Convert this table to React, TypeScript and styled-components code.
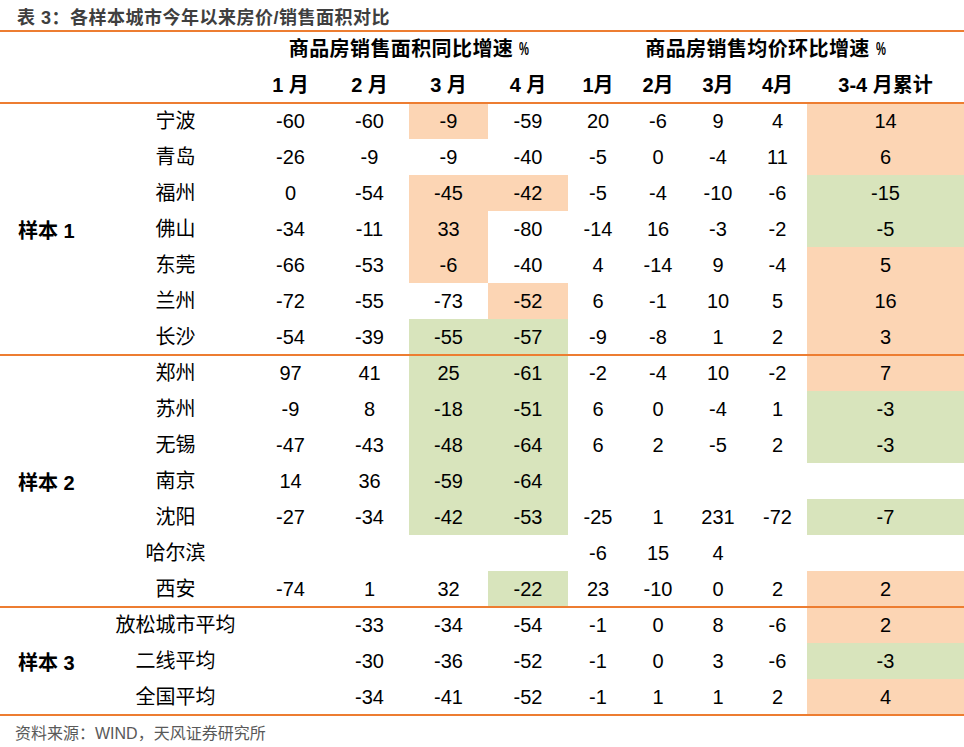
import React from "react";
import styled, { createGlobalStyle } from "styled-components";

const COLS = "100px 151px 79px 79px 79px 80px 60px 60px 60px 59px 1fr";
const ORANGE_LINE = "#ED7D31";
const TONES: Record<string, string> = { o: "#FCD5B4", g: "#D8E4BC" };

const GlobalStyle = createGlobalStyle`
  html, body { margin: 0; padding: 0; background: #fff; }
  body {
    font-family: "Liberation Sans", "Noto Sans CJK SC", sans-serif;
    color: #000;
  }
`;

const Page = styled.div`
  width: 964px;
  display: flex;
  flex-direction: column;
`;

const Title = styled.div`
  height: 31px;
  padding-left: 17px;
  display: flex;
  align-items: center;
  font-family: "Liberation Sans", "Noto Sans CJK SC", sans-serif;
  font-weight: bold;
  font-size: 18px;
  letter-spacing: 0.5px;
  color: #3f3f3f;
`;

const Rule = styled.div`
  height: 2px;
  margin: -1px 0;
  background: ${ORANGE_LINE};
  position: relative;
  z-index: 1;
`;

const HeaderGrid = styled.div`
  display: grid;
  grid-template-columns: ${COLS};
  grid-template-rows: 35px 37px;
  font-weight: bold;
  font-size: 20px;
`;

const HeadCell = styled.div<{ $span?: number }>`
  grid-column: span ${(p) => p.$span ?? 1};
  display: flex;
  align-items: center;
  justify-content: center;
  white-space: pre;
  line-height: 1;
`;

const GroupTitle = styled.span`
  letter-spacing: 0.4px;
`;

const Pct = styled.span`
  display: inline-block;
  font-size: 18px;
  margin-left: 6px;
  transform: scaleX(0.62);
  transform-origin: left center;
  width: 11px;
`;

const Section = styled.div<{ $rows: number }>`
  display: grid;
  grid-template-columns: ${COLS};
  grid-template-rows: repeat(${(p) => p.$rows}, 36px);
`;

const SampleLabel = styled.div<{ $rows: number }>`
  grid-column: 1;
  grid-row: 1 / span ${(p) => p.$rows};
  display: flex;
  align-items: center;
  padding-left: 18px;
  font-weight: bold;
  font-size: 20px;
  white-space: pre;
`;

const CityCell = styled.div`
  display: flex;
  align-items: center;
  justify-content: center;
  font-size: 20px;
  line-height: 1;
`;

const DataCell = styled.div<{ $tone?: string }>`
  display: flex;
  align-items: center;
  justify-content: center;
  font-size: 20px;
  line-height: 1;
  background: ${(p) => (p.$tone ? TONES[p.$tone] : "transparent")};
`;

const Footer = styled.div`
  padding: 10px 0 0 15px;
  line-height: 18px;
  font-size: 16px;
  color: #595959;
`;

type Cell = string | [string, string];
type Row = { city: string; cells: Cell[] };
type Block = { label: string; rows: Row[] };

const blocks: Block[] = [
  {
    label: "样本 1",
    rows: [
      { city: "宁波", cells: ["-60", "-60", ["-9", "o"], "-59", "20", "-6", "9", "4", ["14", "o"]] },
      { city: "青岛", cells: ["-26", "-9", "-9", "-40", "-5", "0", "-4", "11", ["6", "o"]] },
      { city: "福州", cells: ["0", "-54", ["-45", "o"], ["-42", "o"], "-5", "-4", "-10", "-6", ["-15", "g"]] },
      { city: "佛山", cells: ["-34", "-11", ["33", "o"], "-80", "-14", "16", "-3", "-2", ["-5", "g"]] },
      { city: "东莞", cells: ["-66", "-53", ["-6", "o"], "-40", "4", "-14", "9", "-4", ["5", "o"]] },
      { city: "兰州", cells: ["-72", "-55", "-73", ["-52", "o"], "6", "-1", "10", "5", ["16", "o"]] },
      { city: "长沙", cells: ["-54", "-39", ["-55", "g"], ["-57", "g"], "-9", "-8", "1", "2", ["3", "o"]] },
    ],
  },
  {
    label: "样本 2",
    rows: [
      { city: "郑州", cells: ["97", "41", ["25", "g"], ["-61", "g"], "-2", "-4", "10", "-2", ["7", "o"]] },
      { city: "苏州", cells: ["-9", "8", ["-18", "g"], ["-51", "g"], "6", "0", "-4", "1", ["-3", "g"]] },
      { city: "无锡", cells: ["-47", "-43", ["-48", "g"], ["-64", "g"], "6", "2", "-5", "2", ["-3", "g"]] },
      { city: "南京", cells: ["14", "36", ["-59", "g"], ["-64", "g"], "", "", "", "", ""] },
      { city: "沈阳", cells: ["-27", "-34", ["-42", "g"], ["-53", "g"], "-25", "1", "231", "-72", ["-7", "g"]] },
      { city: "哈尔滨", cells: ["", "", "", "", "-6", "15", "4", "", ""] },
      { city: "西安", cells: ["-74", "1", "32", ["-22", "g"], "23", "-10", "0", "2", ["2", "o"]] },
    ],
  },
  {
    label: "样本 3",
    rows: [
      { city: "放松城市平均", cells: ["", "-33", "-34", "-54", "-1", "0", "8", "-6", ["2", "o"]] },
      { city: "二线平均", cells: ["", "-30", "-36", "-52", "-1", "0", "3", "-6", ["-3", "g"]] },
      { city: "全国平均", cells: ["", "-34", "-41", "-52", "-1", "1", "1", "2", ["4", "o"]] },
    ],
  },
];

const months1 = ["1 月", "2 月", "3 月", "4 月"];
const months2 = ["1月", "2月", "3月", "4月", "3-4 月累计"];

export default function App() {
  return (
    <>
      <GlobalStyle />
      <Page>
        <Title>表 3：各样本城市今年以来房价/销售面积对比</Title>
        <Rule />
        <HeaderGrid>
          <HeadCell $span={2} />
          <HeadCell $span={4}>
            <GroupTitle>商品房销售面积同比增速</GroupTitle>
            <Pct>%</Pct>
          </HeadCell>
          <HeadCell $span={5}>
            <GroupTitle>商品房销售均价环比增速</GroupTitle>
            <Pct>%</Pct>
          </HeadCell>
          <HeadCell $span={2} />
          {months1.map((m) => (
            <HeadCell key={"a" + m}>{m}</HeadCell>
          ))}
          {months2.map((m) => (
            <HeadCell key={"b" + m}>{m}</HeadCell>
          ))}
        </HeaderGrid>
        <Rule />
        {blocks.map((b) => (
          <React.Fragment key={b.label}>
            <Section $rows={b.rows.length}>
              <SampleLabel $rows={b.rows.length}>{b.label}</SampleLabel>
              {b.rows.map((r) => (
                <React.Fragment key={r.city}>
                  <CityCell>{r.city}</CityCell>
                  {r.cells.map((c, i) =>
                    Array.isArray(c) ? (
                      <DataCell key={i} $tone={c[1]}>
                        {c[0]}
                      </DataCell>
                    ) : (
                      <DataCell key={i}>{c}</DataCell>
                    )
                  )}
                </React.Fragment>
              ))}
            </Section>
            <Rule />
          </React.Fragment>
        ))}
        <Footer>资料来源：WIND，天风证券研究所</Footer>
      </Page>
    </>
  );
}
